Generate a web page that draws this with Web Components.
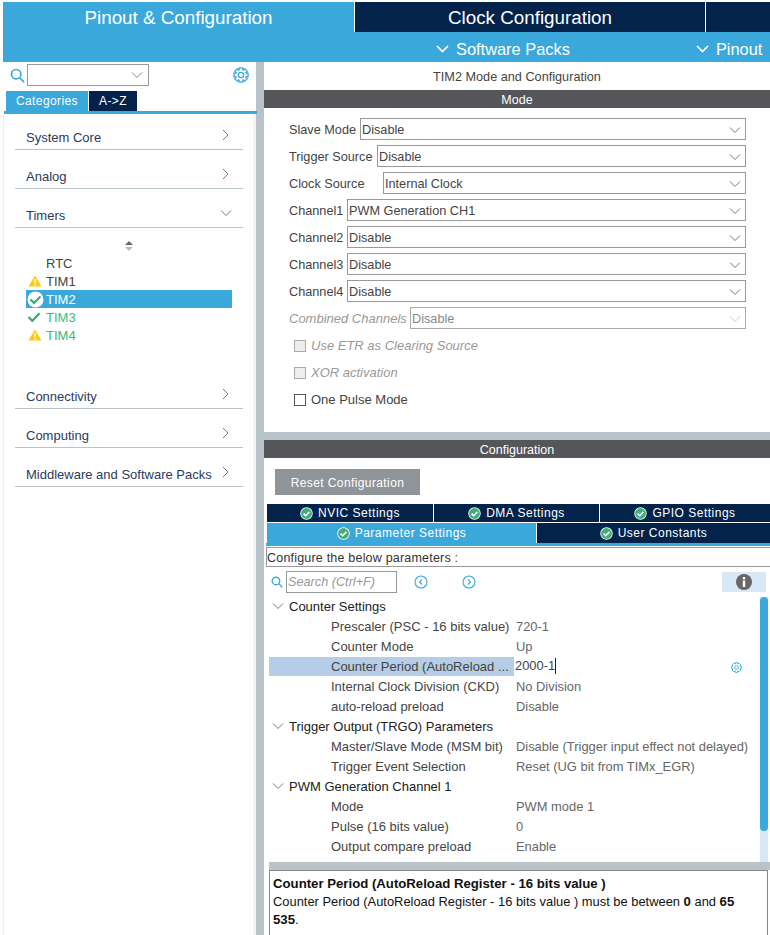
<!DOCTYPE html>
<html>
<head>
<meta charset="utf-8">
<title>TIM2 Mode and Configuration</title>
<style>
  html, body { margin: 0; padding: 0; background: #fff; }
  body { width: 770px; height: 935px; box-sizing: border-box; padding-top: 2px; overflow: hidden; font-family: "Liberation Sans", Arial, sans-serif; }
  .split { display: flex; height: 873px; padding-left: 3px; }
</style>
</head>
<body>
<cube-header></cube-header>
<div class="split">
  <cube-sidebar>
    <cube-category label="System Core"></cube-category>
    <cube-category label="Analog"></cube-category>
    <cube-category label="Timers" open>
      <cube-timer-list></cube-timer-list>
    </cube-category>
    <cube-category label="Connectivity"></cube-category>
    <cube-category label="Computing"></cube-category>
    <cube-category label="Middleware and Software Packs"></cube-category>
  </cube-sidebar>
  <cube-main>
    <cube-mode-panel></cube-mode-panel>
    <cube-config-panel></cube-config-panel>
  </cube-main>
</div>

<script>
const CHEVRON_DOWN = '<svg width="12" height="8" viewBox="0 0 12 8"><path d="M1 1.500l5 5 5-5" fill="none" stroke="currentColor" stroke-width="1"/></svg>';
const CHEVRON_RIGHT = '<svg width="8" height="12" viewBox="0 0 8 12"><path d="M1 1l5 5-5 5" fill="none" stroke="currentColor" stroke-width="1"/></svg>';
const CHEVRON_WHITE = '<svg width="13" height="8" viewBox="0 0 13 8"><path d="M1 1l5.500 5.500L12 1" fill="none" stroke="#fff" stroke-width="1.700"/></svg>';

// 8 tooth cog outline
function gearPath() {
  let d = '';
  for (let i = 0; i < 8; i++) {
    const a = i * Math.PI / 4;
    const pts = [[8.2, -.42], [10.9, -.24], [10.9, .24], [8.2, .42]];
    pts.forEach(([r, o], j) => {
      const x = 12 + r * Math.cos(a + o), y = 12 + r * Math.sin(a + o);
      d += (i === 0 && j === 0 ? 'M' : 'L') + x.toFixed(2) + ' ' + y.toFixed(2);
    });
  }
  return d + 'z';
}
const GEAR = size => `<svg width="${size}" height="${size}" viewBox="0 0 24 24" fill="none" stroke="#3ba8dc" stroke-width="2"><circle cx="12" cy="12" r="4"/><path d="${gearPath()}"/></svg>`;
const SEARCH = size => `<svg width="${size}" height="${size}" viewBox="0 0 16 16" fill="none" stroke="#3ba8dc" stroke-width="1.800"><circle cx="6.600" cy="6.600" r="5"/><path d="M10.400 10.400l4.600 4.600"/></svg>`;
const OK_DOT = '<svg width="13" height="13" viewBox="0 0 13 13"><circle cx="6.500" cy="6.500" r="6.200" fill="#fff"/><circle cx="6.500" cy="6.500" r="5.400" fill="#3fae78"/><path d="M3.600 6.600l2.100 2.100 3.700-3.800" fill="none" stroke="#fff" stroke-width="1.600"/></svg>';
const WARN = '<svg class="warn" width="14" height="12" viewBox="0 0 14 12"><path d="M7 .5L13.600 11.500H.4z" fill="#fccb12"/><path d="M7 4v4M7 9v1.400" stroke="#fff" stroke-width="1.300"/></svg>';

class CubeHeader extends HTMLElement {
  constructor() {
    super();
    this.attachShadow({ mode: 'open' });
    this.shadowRoot.innerHTML = `
      <style>
        :host { display: block; margin-left: 3px; background: #3ba8dc; height: 60px; color: #fff; }
        .tabs { display: flex; height: 30px; font-size: 18.800px; }
        .tab { display: flex; align-items: center; justify-content: center; box-sizing: border-box; padding-top: 1px; }
        .one { width: 352px; border-right: 1px solid #fff; }
        .two { width: 351px; background: #03234b; border-right: 1px solid #fff; }
        .three { flex: 1; background: #03234b; }
        .menus { display: flex; height: 30px; font-size: 16.400px; align-items: center; }
        .menu { display: flex; align-items: center; gap: 7px; position: relative; top: 2px; }
        .packs { margin-left: 433px; }
        .pinout { margin-left: 126px; }
        svg { display: block; }
      </style>
      <div class="tabs">
        <div class="tab one">Pinout &amp; Configuration</div>
        <div class="tab two">Clock Configuration</div>
        <div class="tab three"></div>
      </div>
      <div class="menus">
        <div class="menu packs">${CHEVRON_WHITE}Software Packs</div>
        <div class="menu pinout">${CHEVRON_WHITE}Pinout</div>
      </div>`;
  }
}

class CubeSidebar extends HTMLElement {
  constructor() {
    super();
    this.attachShadow({ mode: 'open' });
    this.shadowRoot.innerHTML = `
      <style>
        :host { display: flex; flex-direction: column; width: 261px; flex: none; box-sizing: border-box; border-right: 8px solid #b8c4ca; color: #333; font-size: 12px; }
        .search { display: flex; align-items: center; height: 26px; flex: none; padding-left: 7px; position: relative; }
        .combo { width: 122px; height: 22px; margin-left: 2px; border: 1px solid #999; box-sizing: border-box; display: flex; align-items: center; justify-content: flex-end; padding-right: 5px; color: #888; }
        .gear { position: absolute; left: 230px; top: 5px; }
        .tabs { display: flex; height: 20px; flex: none; margin: 3px 0 0 3px; gap: 1px; letter-spacing: .4px; }
        .tabs div { display: flex; align-items: center; justify-content: center; color: #fff; }
        .cat { width: 82px; background: #3ba8dc; }
        .az { width: 48px; background: #03234b; }
        .rule { height: 3px; flex: none; background: #3ba8dc; margin: 0 -1px 0 1px; }
        .list { flex: 1; min-height: 0; padding: 12px 10px 0 11px; box-sizing: border-box; border-left: 1px solid #eee; border-right: 3px solid #f3f3f3; }
        svg { display: block; }
      </style>
      <div class="search">${SEARCH(15)}<div class="combo">${CHEVRON_DOWN}</div><span class="gear">${GEAR(16)}</span></div>
      <div class="tabs"><div class="cat">Categories</div><div class="az">A-&gt;Z</div></div>
      <div class="rule"></div>
      <div class="list"><slot></slot></div>`;
  }
}

class CubeCategory extends HTMLElement {
  constructor() {
    super();
    this.attachShadow({ mode: 'open' });
    const open = this.hasAttribute('open');
    this.shadowRoot.innerHTML = `
      <style>
        :host { display: block; }
        .head { display: flex; align-items: center; justify-content: space-between; height: 23px; border-bottom: 1px solid #b8c4ca; margin-bottom: 15px; padding: 0 13px 0 11px; font-size: 13px; color: #2d3a5c; }
        .ic { color: #777; position: relative; top: -3px; ${open ? 'margin-right: -2px;' : ''} }
        svg { display: block; }
      </style>
      <div class="head"><span>${this.getAttribute('label')}</span><span class="ic">${open ? CHEVRON_DOWN : CHEVRON_RIGHT}</span></div>
      <slot></slot>`;
  }
}

class CubeTimerList extends HTMLElement {
  constructor() {
    super();
    this.attachShadow({ mode: 'open' });
    const row = (name, icon, cls) => `<div class="row ${cls}"><span class="i">${icon}</span><span>${name}</span></div>`;
    this.shadowRoot.innerHTML = `
      <style>
        :host { display: block; height: 145px; margin-top: -3px; font-size: 13px; }
        .sort { display: flex; justify-content: center; height: 14px; width: 228px; }
        .row { display: flex; align-items: center; height: 18px; margin-left: 11px; width: 206px; color: #444; }
        .i { width: 20px; display: flex; flex: none; padding-left: 1px; box-sizing: border-box; }
        .warn { margin-left: 1px; }
        .ok { color: #3cb878; }
        .sel { background: #3ba8dc; color: #fff; }
        svg { display: block; }
      </style>
      <div class="sort"><svg width="10" height="12" viewBox="0 0 10 12"><path d="M5 1l4 4H1z" fill="#666"/><path d="M5 11l4-4H1z" fill="#bbb"/></svg></div>
      ${row('RTC', '', '')}
      ${row('TIM1', WARN, '')}
      ${row('TIM2', `<svg width="17" height="17" viewBox="0 0 17 17"><circle cx="8.500" cy="8.500" r="8" fill="#fff"/><path d="M3.500 8.500l3.500 3.500 6.500-6.500" fill="none" stroke="#3fa776" stroke-width="2.200"/></svg>`, 'sel')}
      ${row('TIM3', `<svg width="14" height="12" viewBox="0 0 14 12"><path d="M1.500 6l3.800 3.800 7.200-7.600" fill="none" stroke="#3fa776" stroke-width="2.200"/></svg>`, 'ok')}
      ${row('TIM4', WARN, 'ok')}`;
  }
}

class CubeMain extends HTMLElement {
  constructor() {
    super();
    this.attachShadow({ mode: 'open' });
    this.shadowRoot.innerHTML = `
      <style>
        :host { display: flex; flex-direction: column; flex: 1; min-width: 0; }
      </style>
      <slot></slot>`;
  }
}

class CubeSelect extends HTMLElement {
  constructor() {
    super();
    this.attachShadow({ mode: 'open' });
    const off = this.hasAttribute('disabled');
    this.shadowRoot.innerHTML = `
      <style>
        :host { display: flex; align-items: flex-start; height: 27px; font-size: ${off ? '13px' : '12.700px'}; color: ${off ? '#999' : '#444'}; ${off ? 'font-style: italic;' : ''} }
        .label { margin-left: 25px; width: var(--w); flex: none; white-space: nowrap; align-self: center; }
        .box { margin: 2px 0 0 2px; flex: none; width: calc(455px - var(--w)); height: 22px; box-sizing: border-box; border: 1px solid ${off ? '#aaa' : '#999'}; display: flex; align-items: center; justify-content: space-between; padding: 1px 4px 0 1px; font-style: normal; font-size: 12.700px; color: ${off ? '#888' : '#444'}; }
        .ic { color: ${off ? '#ccc' : '#777'}; }
        svg { display: block; }
      </style>
      <span class="label">${this.getAttribute('label')}</span>
      <div class="box"><span>${this.getAttribute('value')}</span><span class="ic">${CHEVRON_DOWN}</span></div>`;
    this.style.setProperty('--w', this.getAttribute('w') + 'px');
  }
}

class CubeCheck extends HTMLElement {
  constructor() {
    super();
    this.attachShadow({ mode: 'open' });
    const off = this.hasAttribute('disabled');
    this.shadowRoot.innerHTML = `
      <style>
        :host { display: flex; align-items: center; gap: 5px; height: 27px; padding-left: 30px; font-size: 13px; color: ${off ? '#999' : '#444'}; ${off ? 'font-style: italic;' : ''} }
        i { display: block; width: 10px; height: 10px; border: 1px solid ${off ? '#aaa' : '#555'}; background: ${off ? '#eee' : '#fff'}; }
      </style>
      <i></i><span><slot></slot></span>`;
  }
}

class CubeModePanel extends HTMLElement {
  constructor() {
    super();
    this.attachShadow({ mode: 'open' });
    this.shadowRoot.innerHTML = `
      <style>
        :host { display: block; height: 370px; font-size: 12.700px; color: #444; }
        .title { height: 28px; box-sizing: border-box; display: flex; align-items: center; justify-content: center; padding-top: 1px; }
        .bar { height: 18px; box-sizing: border-box; padding-top: 1px; background: #54565a; color: #fff; display: flex; align-items: center; justify-content: center; margin-bottom: 8px; font-size: 12.500px; }
      </style>
      <div class="title">TIM2 Mode and Configuration</div>
      <div class="bar">Mode</div>
      <cube-select label="Slave Mode" value="Disable" w="69"></cube-select>
      <cube-select label="Trigger Source" value="Disable" w="86"></cube-select>
      <cube-select label="Clock Source" value="Internal Clock" w="92"></cube-select>
      <cube-select label="Channel1" value="PWM Generation CH1" w="56"></cube-select>
      <cube-select label="Channel2" value="Disable" w="56"></cube-select>
      <cube-select label="Channel3" value="Disable" w="56"></cube-select>
      <cube-select label="Channel4" value="Disable" w="56"></cube-select>
      <cube-select label="Combined Channels" value="Disable" w="119" disabled></cube-select>
      <cube-check disabled>Use ETR as Clearing Source</cube-check>
      <cube-check disabled>XOR activation</cube-check>
      <cube-check>One Pulse Mode</cube-check>`;
  }
}

class CubeConfigPanel extends HTMLElement {
  constructor() {
    super();
    this.attachShadow({ mode: 'open' });
    const tab = (t, cls = '') => `<div class="tab ${cls}">${OK_DOT}<span>${t}</span></div>`;
    this.shadowRoot.innerHTML = `
      <style>
        :host { display: block; border-top: 8px solid #b8c4ca; font-size: 12px; color: #333; height: 503px; box-sizing: border-box; overflow: hidden; }
        .bar { height: 18px; box-sizing: border-box; padding-top: 1px; background: #54565a; color: #fff; display: flex; align-items: center; justify-content: center; font-size: 12.500px; }
        .reset { margin: 11px 0 9px 11px; width: 145px; height: 26px; box-sizing: border-box; padding-top: 1px; background: #8f9499; color: #fff; display: flex; align-items: center; justify-content: center; letter-spacing: .4px; }
        .row { display: grid; margin-left: 3px; gap: 1px; }
        .r1 { grid-template-columns: 166px 165px 1fr; height: 18px; margin-bottom: 1px; }
        .r2 { grid-template-columns: 269px 1fr; height: 20px; }
        .tab { display: flex; align-items: center; justify-content: center; gap: 5px; background: #03234b; color: #fff; letter-spacing: .5px; }
        .on { background: #3ba8dc; }
        .rule { height: 3px; background: #3ba8dc; margin-left: 2px; }
        .cfg { height: 20px; margin: 1px 0 0 2px; padding-top: 1px; border: 1px solid #999; border-right: 0; box-sizing: border-box; display: flex; align-items: center; font-size: 12.500px; letter-spacing: .2px; }
        .tools { display: flex; align-items: center; height: 29px; padding-left: 7px; position: relative; }
        .find { margin-left: 3px; width: 111px; height: 22px; border: 1px solid #999; box-sizing: border-box; display: flex; align-items: center; padding-left: 1px; color: #999; font-style: italic; font-size: 12.700px; }
        .nav { position: absolute; top: 8px; }
        .info { position: absolute; left: 458px; top: 5px; width: 44px; height: 20px; background: #d7e7f3; display: flex; align-items: center; justify-content: center; }
        svg { display: block; }
      </style>
      <div class="bar">Configuration</div>
      <div class="reset">Reset Configuration</div>
      <div class="row r1">${tab('NVIC Settings')}${tab('DMA Settings')}${tab('GPIO Settings')}</div>
      <div class="row r2">${tab('Parameter Settings', 'on')}${tab('User Constants')}</div>
      <div class="rule"></div>
      <div class="cfg">Configure the below parameters :</div>
      <div class="tools">${SEARCH(12)}<div class="find">Search (Ctrl+F)</div>
        <svg class="nav" style="left:150px" width="14" height="14" viewBox="0 0 14 14" fill="none" stroke="#3ba8dc" stroke-width="1.100"><circle cx="7" cy="7" r="6"/><path d="M8 4.500L5.500 7 8 9.500"/></svg>
        <svg class="nav" style="left:198px" width="14" height="14" viewBox="0 0 14 14" fill="none" stroke="#3ba8dc" stroke-width="1.100"><circle cx="7" cy="7" r="6"/><path d="M6 4.500L8.500 7 6 9.500"/></svg>
        <div class="info"><svg width="16" height="16" viewBox="0 0 16 16"><circle cx="8" cy="8" r="8" fill="#666"/><rect x="6.800" y="6.500" width="2.400" height="6.500" fill="#fff"/><rect x="6.800" y="3" width="2.400" height="2.400" fill="#fff"/></svg></div>
      </div>
      <cube-param-tree></cube-param-tree>
      <cube-description></cube-description>`;
  }
}

class CubeParamTree extends HTMLElement {
  constructor() {
    super();
    this.attachShadow({ mode: 'open' });
    const head = t => `<div class="item head"><span class="tw">${CHEVRON_DOWN}</span>${t}</div>`;
    const p = (k, v, cls = '', extra = '') => `<div class="item ${cls}"><span class="k">${k}</span><span class="v">${v}</span>${extra}</div>`;
    this.shadowRoot.innerHTML = `
      <style>
        :host { display: block; height: 274px; position: relative; overflow: hidden; font-size: 13px; color: #444; }
        .item { display: flex; align-items: center; height: 20px; white-space: nowrap; position: relative; }
        .head { color: #222; padding-left: 8px; }
        .tw { color: #777; width: 17px; flex: none; }
        .k { margin-left: 67px; width: 185px; flex: none; overflow: hidden; }
        .v { color: #666; font-size: 12.900px; }
        .cur { background: linear-gradient(#b5cde6, #b5cde6) no-repeat 5px 1px / 245px 19px; }
        .cur .v { color: #444; margin-left: -1px; border-right: 1px solid #222; line-height: 16px; }
        .gear { position: absolute; left: 467px; top: 6px; }
        .scroll { position: absolute; right: 2px; top: 1px; width: 8px; height: 265px; background: #d7e7f3; }
        .thumb { width: 8px; height: 234px; background: #3ba8dc; border-radius: 4px; }
        .split { position: absolute; left: 5px; right: 0; bottom: 0; height: 8px; background: #b8c4ca; }
        svg { display: block; }
      </style>
      ${head('Counter Settings')}
      ${p('Prescaler (PSC - 16 bits value)', '720-1')}
      ${p('Counter Mode', 'Up')}
      ${p('Counter Period (AutoReload ...', '2000-1', 'cur', `<span class="gear">${GEAR(11)}</span>`)}
      ${p('Internal Clock Division (CKD)', 'No Division')}
      ${p('auto-reload preload', 'Disable')}
      ${head('Trigger Output (TRGO) Parameters')}
      ${p('Master/Slave Mode (MSM bit)', 'Disable (Trigger input effect not delayed)')}
      ${p('Trigger Event Selection', 'Reset (UG bit from TIMx_EGR)')}
      ${head('PWM Generation Channel 1')}
      ${p('Mode', 'PWM mode 1')}
      ${p('Pulse (16 bits value)', '0')}
      ${p('Output compare preload', 'Enable')}
      ${p('Fast Mode', 'Disable')}
      <div class="scroll"><div class="thumb"></div></div>
      <div class="split"></div>`;
  }
}

class CubeDescription extends HTMLElement {
  constructor() {
    super();
    this.attachShadow({ mode: 'open' });
    this.shadowRoot.innerHTML = `
      <style>
        :host { display: block; margin: 0 2px 0 5px; border: 1px solid #888; border-bottom: 0; padding: 4px 20px 0 3px; font-size: 12.900px; line-height: 18px; color: #111; height: 65px; box-sizing: border-box; }
        b { font-size: 13.200px; }
      </style>
      <b>Counter Period (AutoReload Register - 16 bits value )</b><br>
      Counter Period (AutoReload Register - 16 bits value ) must be between <b>0</b> and <b>65</b> <b>535</b>.`;
  }
}

customElements.define('cube-header', CubeHeader);
customElements.define('cube-sidebar', CubeSidebar);
customElements.define('cube-category', CubeCategory);
customElements.define('cube-timer-list', CubeTimerList);
customElements.define('cube-main', CubeMain);
customElements.define('cube-select', CubeSelect);
customElements.define('cube-check', CubeCheck);
customElements.define('cube-mode-panel', CubeModePanel);
customElements.define('cube-config-panel', CubeConfigPanel);
customElements.define('cube-param-tree', CubeParamTree);
customElements.define('cube-description', CubeDescription);
</script>
</body>
</html>
